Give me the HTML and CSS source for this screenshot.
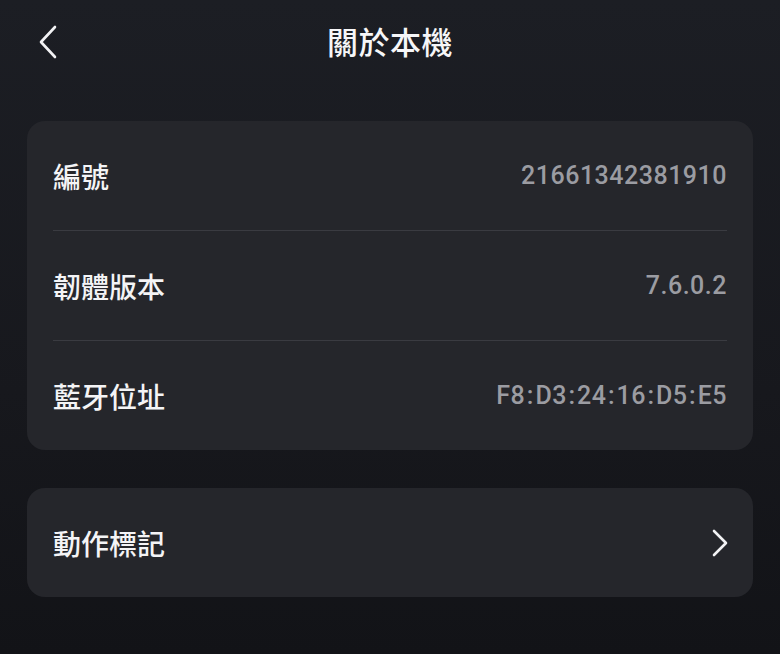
FILE: index.html
```html
<!DOCTYPE html>
<html lang="zh-Hant">
<head>
<meta charset="utf-8">
<link rel="stylesheet" href="styles.css">
</head>
<body>
<div class="page">
  <header class="topbar">
    <button class="back" aria-label="back">
      <svg width="20" height="34" viewBox="0 0 20 34"><path d="M17 2 L3 17 L17 32" fill="none" stroke="#f2f2f4" stroke-width="2.6" stroke-linecap="round" stroke-linejoin="round"/></svg>
    </button>
    <h1 class="title">關於本機</h1>
  </header>
  <section class="card">
    <div class="row">
      <span class="label">編號</span>
      <span class="value">21661342381910</span>
    </div>
    <div class="row">
      <span class="label">韌體版本</span>
      <span class="value">7.6.0.2</span>
    </div>
    <div class="row">
      <span class="label">藍牙位址</span>
      <span class="value">F8<span class="sep">:</span>D3<span class="sep">:</span>24<span class="sep">:</span>16<span class="sep">:</span>D5<span class="sep">:</span>E5</span>
    </div>
  </section>
  <section class="card">
    <div class="row">
      <span class="label">動作標記</span>
      <svg class="chev" width="18" height="28" viewBox="0 0 18 28"><path d="M3 2 L15 14 L3 26" fill="none" stroke="#f2f2f4" stroke-width="2.6" stroke-linecap="round" stroke-linejoin="round"/></svg>
    </div>
  </section>
</div>
</body>
</html>
```

FILE: styles.css
```css
html, body {
  margin: 0;
  padding: 0;
}
body {
  width: 780px;
  height: 654px;
  background: linear-gradient(180deg, #1c1e24 0%, #17181d 60%, #121317 100%);
  font-family: "Noto Sans CJK TC", "Noto Sans CJK SC", sans-serif;
  color: #f4f4f6;
  overflow: hidden;
}
.page {
  padding: 0 27px;
  display: flex;
  flex-direction: column;
}
.topbar {
  height: 121px;
  position: relative;
  display: flex;
  justify-content: center;
}
.back {
  position: absolute;
  left: 11px;
  top: 25px;
  background: none;
  border: 0;
  padding: 0;
  display: flex;
}
.title {
  margin: 0;
  margin-top: 19px;
  height: 44px;
  line-height: 44px;
  font-size: 31px;
  font-weight: 500;
  letter-spacing: 0.5px;
  color: #f6f6f8;
}
.card {
  background: #25262b;
  border-radius: 18px;
  padding: 0 26px;
  margin-bottom: 38px;
}
.row {
  height: 109px;
  display: flex;
  align-items: center;
  justify-content: space-between;
}
.row + .row {
  border-top: 1.5px solid #3a3b41;
}
.label {
  font-size: 28px;
  font-weight: 500;
  color: #f4f4f6;
}
.value {
  font-family: Roboto, "Liberation Sans", sans-serif;
  font-size: 25px;
  font-weight: 500;
  letter-spacing: 0.5px;
  color: #9b9ca2;
}
.sep {
  margin: 0 1.5px;
}
.chev {
  margin-right: -2px;
}
```
